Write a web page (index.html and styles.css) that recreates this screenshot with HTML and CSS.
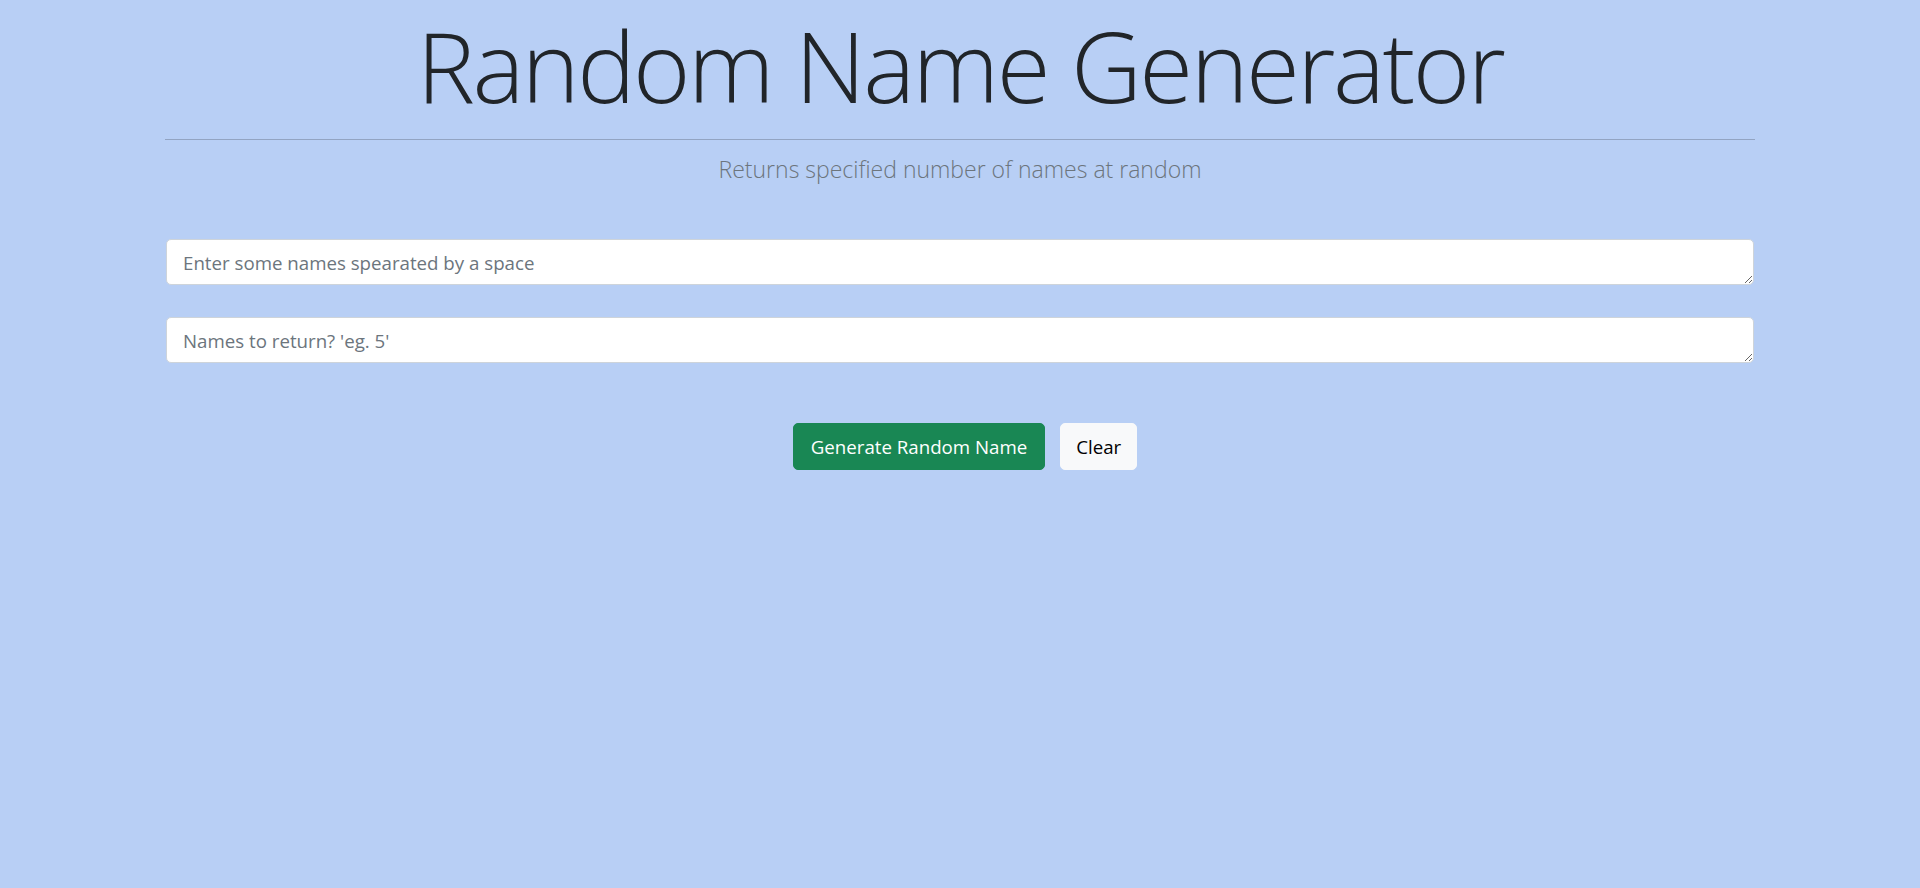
FILE: index.html
```html
<!DOCTYPE html>
<html lang="en">
<head>
<meta charset="utf-8">
<title>Random Name Generator</title>
<link rel="stylesheet" href="styles.css">
</head>
<body>
<main class="container">
  <h1 class="title">Random Name Generator</h1>
  <hr class="rule">
  <p class="lead">Returns specified number of names at random</p>
  <form class="form">
    <textarea class="field" rows="1" placeholder="Enter some names spearated by a space"></textarea>
    <textarea class="field" rows="1" placeholder="Names to return? 'eg. 5'"></textarea>
    <div class="actions">
      <button type="button" class="btn btn-success">Generate Random Name</button>
      <button type="button" class="btn btn-light">Clear</button>
    </div>
  </form>
</main>
</body>
</html>
```

FILE: styles.css
```css
* { box-sizing: border-box; }
html, body { margin: 0; padding: 0; }
body {
  background: #b8cff5;
  color: #212529;
  font-family: "Open Sans", "Noto Sans", "Liberation Sans", sans-serif;
  min-height: 888px;
}
.container {
  width: 1590px;
  margin: 0 auto;
  display: flex;
  flex-direction: column;
}
.title {
  margin: 2px 0 0;
  font-size: 98px;
  font-weight: 300;
  line-height: 1.3;
  text-align: center;
  color: #212529;
  letter-spacing: -2.5px;
}
.rule {
  margin: 10px 0 0;
  border: 0;
  border-top: 1px solid #92a4c2;
  height: 0;
}
.lead {
  margin: 11px 0 0;
  font-size: 23px;
  font-weight: 300;
  line-height: 36px;
  text-align: center;
  color: #6c757d;
}
.form {
  margin-top: 52px;
  display: flex;
  flex-direction: column;
  align-items: center;
}
.field {
  display: block;
  width: 1588px;
  height: 46px;
  margin: 0 0 32px;
  padding: 8px 16px 6px;
  font-family: "Open Sans", "Noto Sans", "Liberation Sans", sans-serif;
  font-size: 18.7px;
  line-height: 30px;
  color: #212529;
  background: #fff;
  border: 1px solid #ced4da;
  border-radius: 5px;
  resize: vertical;
  outline: none;
}
.field::placeholder { color: #6c757d; opacity: 1; }
.actions {
  margin-top: 28px;
  display: flex;
  justify-content: center;
  gap: 15px;
  padding-left: 10px;
}
.btn {
  height: 47px;
  padding: 0 15px;
  font-family: "Open Sans", "Noto Sans", "Liberation Sans", sans-serif;
  font-size: 18.7px;
  line-height: 1;
  border: 1px solid transparent;
  border-radius: 5px;
  cursor: pointer;
}
.btn-success { background: #198754; border-color: #198754; color: #fff; padding: 0 17px; }
.btn-light { background: #f8f9fa; border-color: #f8f9fa; color: #000; }
```
